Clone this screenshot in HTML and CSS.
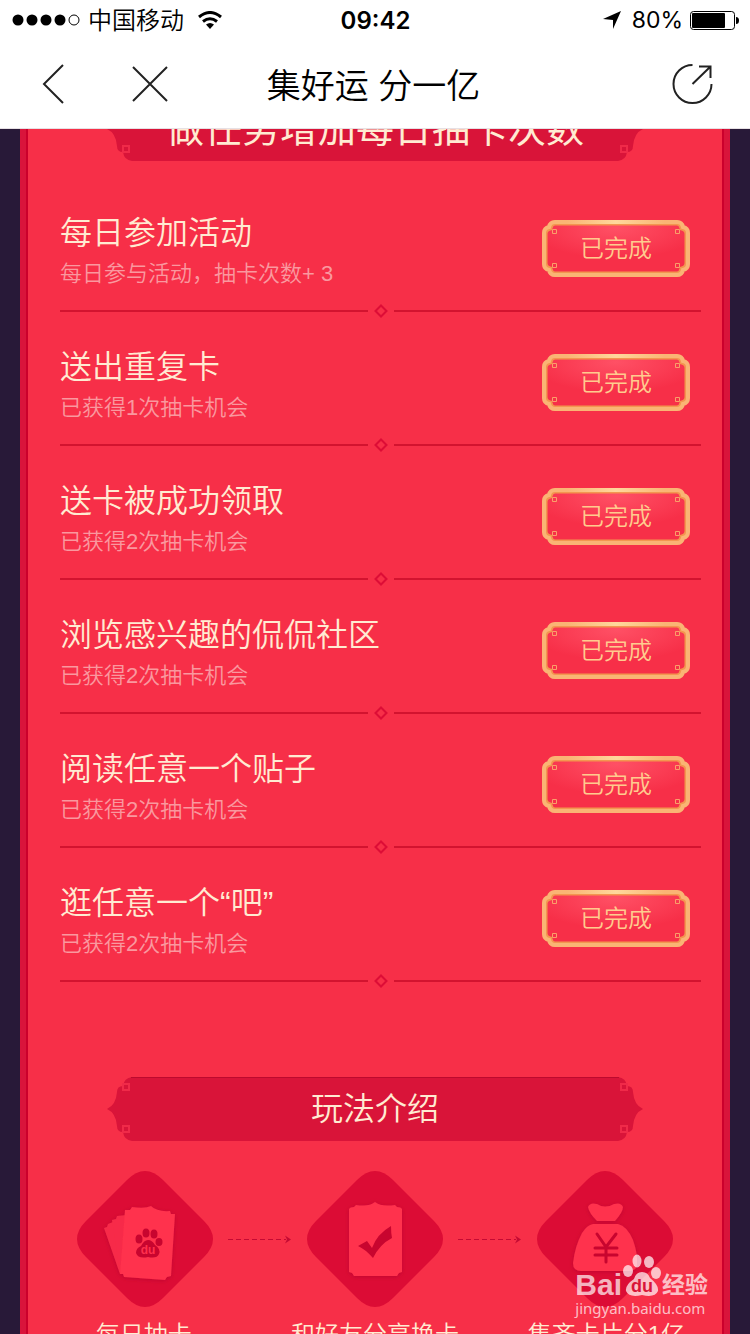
FILE: index.html
```html
<!DOCTYPE html>
<html lang="zh-CN">
<head>
    <meta charset="UTF-8">
    <meta name="viewport" content="width=device-width, initial-scale=1.0">
    <title>集好运 分一亿</title>
    <link rel="stylesheet" href="styles.css">
</head>
<body>

    <!-- shared shapes -->
    <svg class="defs" width="0" height="0" aria-hidden="true">
        <defs>
            <radialGradient id="badgeFill" cx="50%" cy="10%" r="60%">
                <stop offset="0" stop-color="#ff5065"/>
                <stop offset="1" stop-color="#f72f48"/>
            </radialGradient>
            <linearGradient id="badgeGold" x1="0" y1="0" x2="1" y2="0">
                <stop offset="0.1" stop-color="#fab474"/>
                <stop offset="0.5" stop-color="#ffd79b"/>
                <stop offset="0.9" stop-color="#fab474"/>
            </linearGradient>
            <filter id="soft" x="-20%" y="-20%" width="140%" height="140%">
                <feDropShadow dx="0" dy="1" stdDeviation="2" flood-color="#b0002a" flood-opacity="0.6"/>
            </filter>
        </defs>
        <symbol id="banner" viewBox="0 0 536 64">
            <path fill="#d91439" d="M25 0H511Q519 1 520 9Q526 9 526 15Q527 28 536 32Q527 36 526 49Q526 55 520 55Q519 63 511 64H25Q17 63 16 55Q10 55 10 49Q9 36 0 32Q9 28 10 15Q10 9 16 9Q17 1 25 0Z"/>
            <path fill="none" stroke="#bd0a2e" d="M24 0.500H512"/>
            <path fill="none" stroke="#f02a49" stroke-width="2" d="M16 7h6v6h-6zM514 7h6v6h-6zM16 49h6v6h-6zM514 49h6v6h-6z"/>
        </symbol>
        <symbol id="badge" viewBox="0 0 148 57">
            <path fill="url(#badgeFill)" stroke="#f3964f" stroke-width="5" d="M13 3H135Q139 3 140 8Q145 9 145 14V43Q145 48 140 49Q139 54 135 54H13Q9 54 8 49Q3 48 3 43V14Q3 9 8 8Q9 3 13 3Z"/>
            <path fill="none" stroke="#fab474" stroke-width="4" d="M13 2H135Q140 2 141 7Q146 8 146 13V44Q146 49 141 50Q140 55 135 55H13Q8 55 7 50Q2 49 2 44V13Q2 8 7 7Q8 2 13 2Z"/>
            <rect x="13" y="0" width="122" height="4" fill="url(#badgeGold)"/>
            <path fill="none" stroke="#fa9f69" d="M10.500 9.500h4v4h-4zM133.500 9.500h4v4h-4zM10.500 43.500h4v4h-4zM133.500 43.500h4v4h-4z"/>
        </symbol>
        <symbol id="rhombus" viewBox="0 0 14 14">
            <path fill="none" stroke="#dd0d36" stroke-width="2" d="M7 1.500L12.500 7L7 12.500L1.500 7Z"/>
        </symbol>
        <symbol id="diamond" viewBox="0 0 136 136">
            <path fill="#dc0c35" d="M50 9Q68 -9 86 9L127 50Q145 68 127 86L86 127Q68 145 50 127L9 86Q-9 68 9 50Z"/>
        </symbol>
        <symbol id="arrow" viewBox="0 0 64 10">
            <path fill="none" stroke="#c50a33" stroke-dasharray="5 3" d="M0 5.500H58" stroke-width="1"/>
            <path fill="#c50a33" d="M57 1.500L63 5.500L57 9.500L59 5.500Z"/>
        </symbol>
    </svg>

    <header class="header">
        <div class="status-bar">
            <div class="status-left">
                <svg width="68" height="12" viewBox="0 0 68 12" aria-hidden="true">
                    <circle cx="6" cy="6" r="5.500"/>
                    <circle cx="20" cy="6" r="5.500"/>
                    <circle cx="34" cy="6" r="5.500"/>
                    <circle cx="48" cy="6" r="5.500"/>
                    <circle cx="62" cy="6" r="5" fill="none" stroke="#000"/>
                </svg>
                <span class="carrier">中国移动</span>
                <svg width="24" height="18" viewBox="0 0 24 18" aria-hidden="true">
                    <path fill="none" stroke="#000" stroke-width="3" d="M1 6Q12 -3 23 6M5 10.500Q12 5 19 10.500"/>
                    <path d="M8 13.500Q12 10.500 16 13.500L12 18Z"/>
                </svg>
            </div>
            <span class="time">09:42</span>
            <div class="status-right">
                <svg width="18" height="18" viewBox="0 0 18 18" aria-hidden="true">
                    <path d="M18 0L10 18V9L0 8Z"/>
                </svg>
                <span class="percent">80%</span>
                <svg width="49" height="20" viewBox="0 0 49 20" aria-hidden="true">
                    <rect x="0.500" y="1.500" width="44" height="18" rx="3" fill="none" stroke="#000"/>
                    <rect x="2" y="3" width="33" height="15" rx="1"/>
                    <path d="M46 7Q49 7 49 10.500Q49 14 46 14Z"/>
                </svg>
            </div>
        </div>

        <nav class="nav-bar">
            <div class="nav-left">
                <button class="icon-btn" type="button" aria-label="返回">
                    <svg width="40" height="40" viewBox="0 0 40 40"><path d="M30 1L11 20L30 39"/></svg>
                </button>
                <button class="icon-btn" type="button" aria-label="关闭">
                    <svg width="40" height="40" viewBox="0 0 40 40"><path d="M3 3L37 37M37 3L3 37"/></svg>
                </button>
            </div>
            <h1 class="nav-title">集好运 分一亿</h1>
            <div class="nav-right">
                <button class="icon-btn" type="button" aria-label="分享">
                    <svg width="42" height="42" viewBox="0 0 42 42"><path d="M20.500 2A19 19 0 1 0 39.500 21M20.500 21L38 4M27 3.500H38.500V15"/></svg>
                </button>
            </div>
        </nav>
    </header>

    <main class="page">
        <div class="panel">
            <h2 class="banner banner-large">
                <svg width="536" height="64" aria-hidden="true"><use href="#banner"/></svg>
                <span>做任务增加每日抽卡次数</span>
            </h2>

            <ul class="task-list">
                <li>
                    <div class="task">
                        <div class="task-text">
                            <h3>每日参加活动</h3>
                            <p>每日参与活动，抽卡次数+ 3</p>
                        </div>
                        <button class="done" type="button"><svg width="148" height="57" aria-hidden="true"><use href="#badge"/></svg><span>已完成</span></button>
                    </div>
                    <div class="divider"><svg width="14" height="14" aria-hidden="true"><use href="#rhombus"/></svg></div>
                </li>
                <li>
                    <div class="task">
                        <div class="task-text">
                            <h3>送出重复卡</h3>
                            <p>已获得1次抽卡机会</p>
                        </div>
                        <button class="done" type="button"><svg width="148" height="57" aria-hidden="true"><use href="#badge"/></svg><span>已完成</span></button>
                    </div>
                    <div class="divider"><svg width="14" height="14" aria-hidden="true"><use href="#rhombus"/></svg></div>
                </li>
                <li>
                    <div class="task">
                        <div class="task-text">
                            <h3>送卡被成功领取</h3>
                            <p>已获得2次抽卡机会</p>
                        </div>
                        <button class="done" type="button"><svg width="148" height="57" aria-hidden="true"><use href="#badge"/></svg><span>已完成</span></button>
                    </div>
                    <div class="divider"><svg width="14" height="14" aria-hidden="true"><use href="#rhombus"/></svg></div>
                </li>
                <li>
                    <div class="task">
                        <div class="task-text">
                            <h3>浏览感兴趣的侃侃社区</h3>
                            <p>已获得2次抽卡机会</p>
                        </div>
                        <button class="done" type="button"><svg width="148" height="57" aria-hidden="true"><use href="#badge"/></svg><span>已完成</span></button>
                    </div>
                    <div class="divider"><svg width="14" height="14" aria-hidden="true"><use href="#rhombus"/></svg></div>
                </li>
                <li>
                    <div class="task">
                        <div class="task-text">
                            <h3>阅读任意一个贴子</h3>
                            <p>已获得2次抽卡机会</p>
                        </div>
                        <button class="done" type="button"><svg width="148" height="57" aria-hidden="true"><use href="#badge"/></svg><span>已完成</span></button>
                    </div>
                    <div class="divider"><svg width="14" height="14" aria-hidden="true"><use href="#rhombus"/></svg></div>
                </li>
                <li>
                    <div class="task">
                        <div class="task-text">
                            <h3>逛任意一个“吧”</h3>
                            <p>已获得2次抽卡机会</p>
                        </div>
                        <button class="done" type="button"><svg width="148" height="57" aria-hidden="true"><use href="#badge"/></svg><span>已完成</span></button>
                    </div>
                    <div class="divider"><svg width="14" height="14" aria-hidden="true"><use href="#rhombus"/></svg></div>
                </li>
            </ul>

            <h2 class="banner">
                <svg width="536" height="64" aria-hidden="true"><use href="#banner"/></svg>
                <span>玩法介绍</span>
            </h2>

            <div class="step-icons">
                <!-- cards -->
                <svg width="136" height="136" viewBox="0 0 136 136" aria-hidden="true">
                    <use href="#diamond"/>
                    <g fill="#f72c48" filter="url(#soft)">
                        <path d="M27 57L30 56L31 53L36 51L52 100L43 103Z"/>
                        <path d="M35 49L39 48L40 45L50 44L54 100L43 102Z"/>
                        <path fill="#ff304d" d="M48 39L53 39L55 36Q68 38 74 35Q80 41 93 40L94 43L98 43L94 105L90 106L88 109L47 106L46 103L43 103Z"/>
                    </g>
                    <g fill="#c8052f">
                        <ellipse cx="62" cy="68" rx="3.500" ry="4.500"/>
                        <ellipse cx="69" cy="62" rx="3.500" ry="4.500"/>
                        <ellipse cx="77" cy="63" rx="3.500" ry="4.500"/>
                        <ellipse cx="82" cy="71" rx="3.500" ry="4"/>
                        <path d="M71 69Q75 69 78 74Q84 78 82 83Q80 88 71 86Q61 88 59 82Q59 77 64 75Q67 69 71 69Z"/>
                    </g>
                    <text class="du-small" x="71" y="83" text-anchor="middle">du</text>
                </svg>
                <svg width="64" height="10" aria-hidden="true"><use href="#arrow"/></svg>
                <!-- ticked card -->
                <svg width="136" height="136" viewBox="0 0 136 136" aria-hidden="true">
                    <use href="#diamond"/>
                    <path fill="#ff304d" filter="url(#soft)" d="M42 38Q43 36 47 36L49 34Q62 36 68 31Q74 36 88 34L90 36Q94 36 95 38V101L92 102L90 105H47L45 102L42 101Z"/>
                    <path fill="#c8052f" d="M51 75L60 70L65 77Q70 63 84 55Q84 62 85 67Q73 73 66 87Q58 78 51 75Z"/>
                </svg>
                <svg width="64" height="10" aria-hidden="true"><use href="#arrow"/></svg>
                <!-- money bag -->
                <svg width="136" height="136" viewBox="0 0 136 136" aria-hidden="true">
                    <use href="#diamond"/>
                    <g fill="#ff304d" filter="url(#soft)">
                        <path d="M51 36Q53 31 60 33Q68 38 77 33Q84 31 86 36Q86 41 78 50H60Q52 42 51 36Z"/>
                        <path d="M56 53H81Q90 55 96 69Q101 83 100 94Q99 100 92 100H44Q36 100 36 92Q38 75 45 62Q50 54 56 53Z"/>
                    </g>
                    <path fill="none" stroke="#c8052f" stroke-width="3" stroke-linecap="round" d="M60 63L69 76L79 63M58 77H80M58 84H80M69 77V91"/>
                </svg>
            </div>
            <ol class="step-labels">
                <li>每日抽卡</li>
                <li>和好友分享换卡</li>
                <li>集齐卡片分1亿</li>
            </ol>
        </div>
    </main>

    <div class="watermark">
        <div class="watermark-logo">
            <span class="bai">Bai</span>
            <svg width="40" height="43" viewBox="0 0 40 43" aria-hidden="true">
                <path fill="currentColor" d="M20 18Q26 18 28 24Q37 31 36 37Q33 44 20 41Q7 44 4 37Q3 31 12 25Q14 18 20 18Z"/>
                <g fill="currentColor">
                    <ellipse cx="6" cy="17" rx="5" ry="6"/>
                    <ellipse cx="15" cy="7" rx="4.500" ry="6.500"/>
                    <ellipse cx="27" cy="8" rx="5" ry="6"/>
                    <ellipse cx="34" cy="19" rx="5" ry="6"/>
                </g>
                <text class="du" x="20" y="38" text-anchor="middle">du</text>
            </svg>
            <span class="jingyan">经验</span>
        </div>
        <span class="url">jingyan.baidu.com</span>
    </div>

</body>
</html>
```
FILE: styles.css
```css
/* Global Style */
* {
    box-sizing: border-box;
}

body {
    font-family: "Liberation Sans", "Noto Sans CJK SC", sans-serif;
    font-weight: 350;
    background-color: #281938;
    color: #000;
    margin: 0;
    height: 100vh;
    display: flex;
    flex-direction: column;
    overflow: hidden;
    position: relative;
}

h1, h2, h3, p, ul, ol {
    margin: 0;
    padding: 0;
    font-weight: inherit;
}

ul, ol {
    list-style: none;
}

svg {
    display: block;
    flex-shrink: 0;
}

button {
    border: none;
    background: none;
    padding: 0;
    font-family: inherit;
    font-weight: inherit;
    cursor: pointer;
}

.defs {
    position: absolute;
}

/* Header */
.header {
    background-color: #fff;
    border-bottom: 1px solid #e6e0e4;
    flex-shrink: 0;
}

.status-bar {
    display: grid;
    grid-template-columns: 1fr auto 1fr;
    align-items: center;
    height: 40px;
    padding: 0 11px 0 12px;
}

.status-left,
.status-right {
    display: flex;
    align-items: center;
    gap: 8px;
}

.status-right {
    justify-content: flex-end;
}

.carrier {
    font-size: 24px;
    line-height: 38px;
    padding-top: 2px;
    margin-right: 6px;
}

.time {
    font-family: Inter, sans-serif;
    font-size: 24px;
    font-weight: 600;
}

.percent {
    font-family: Inter, sans-serif;
    font-size: 23px;
    font-weight: 400;
    margin-left: 4px;
}

.status-right {
    gap: 7px;
}

.nav-bar {
    display: grid;
    grid-template-columns: 1fr auto 1fr;
    align-items: center;
    height: 88px;
    padding: 0 36px 0 33px;
}

.nav-left {
    display: flex;
    gap: 57px;
}

.nav-right {
    display: flex;
    justify-content: flex-end;
}

.nav-title {
    font-size: 34px;
    line-height: 48px;
    padding-top: 3px;
}

.icon-btn path {
    fill: none;
    stroke: #222;
    stroke-width: 2;
}

/* Page */
.page {
    flex: 1;
    min-height: 0;
    overflow: hidden;
    padding: 0 20px;
}

.panel {
    background-color: #f72f48;
    border: solid #d9143b;
    border-width: 0 6px;
    box-shadow: inset 2px 0 #cc002c, inset -2px 0 #cc002c;
    min-height: 100%;
    padding: 0 2px;
}

.banner {
    display: grid;
    place-items: center;
    color: #ffebd2;
    font-size: 32px;
    line-height: 64px;
}

.banner svg,
.banner span {
    grid-area: 1 / 1;
}

/* scrolled partly under the header */
.banner-large {
    font-size: 38px;
    font-weight: 400;
    margin-top: -32px;
}

.task-list {
    padding: 23px 21px 89px 32px;
}

.task {
    display: flex;
    justify-content: space-between;
    align-items: center;
    padding: 25px 11px 16px 0;
}

.task-text {
    display: flex;
    flex-direction: column;
    gap: 3px;
}

.task-text h3 {
    color: #ffebd2;
    font-size: 32px;
    line-height: 48px;
}

.task-text p {
    color: #fa989f;
    font-size: 22px;
    line-height: 28px;
}

.done {
    display: grid;
    place-items: center;
    color: #ffcb8e;
    font-size: 24px;
    line-height: 57px;
}

.done svg,
.done span {
    grid-area: 1 / 1;
}

.divider {
    display: flex;
    align-items: center;
    gap: 6px;
}

.divider::before,
.divider::after {
    content: "";
    flex: 1;
    height: 2px;
    background-color: #d3132f;
}

.divider::after {
    order: 1;
}

.step-icons {
    display: flex;
    justify-content: center;
    align-items: center;
    gap: 15px;
    margin-top: 30px;
}

.step-labels {
    display: grid;
    grid-template-columns: repeat(3, 1fr);
    text-align: center;
    color: #ffebd2;
    font-size: 24px;
    line-height: 36px;
    margin-top: 10px;
}

.du-small {
    font-size: 12px;
    font-weight: bold;
    fill: #ff304d;
}

/* Watermark */
.watermark {
    position: absolute;
    right: 42px;
    bottom: 15px;
    color: rgba(255, 255, 255, 0.7);
}

.watermark-logo {
    display: flex;
    align-items: flex-end;
    font-weight: bold;
}

.bai {
    font-size: 30px;
    line-height: 24px;
}

.jingyan {
    font-size: 23px;
    line-height: 24px;
    font-weight: bold;
}

.du {
    font-size: 18px;
    font-weight: bold;
    fill: #d91439;
}

.url {
    display: block;
    font-family: "Noto Sans", sans-serif;
    font-size: 15px;
    font-weight: 400;
    line-height: 22px;
}
```
